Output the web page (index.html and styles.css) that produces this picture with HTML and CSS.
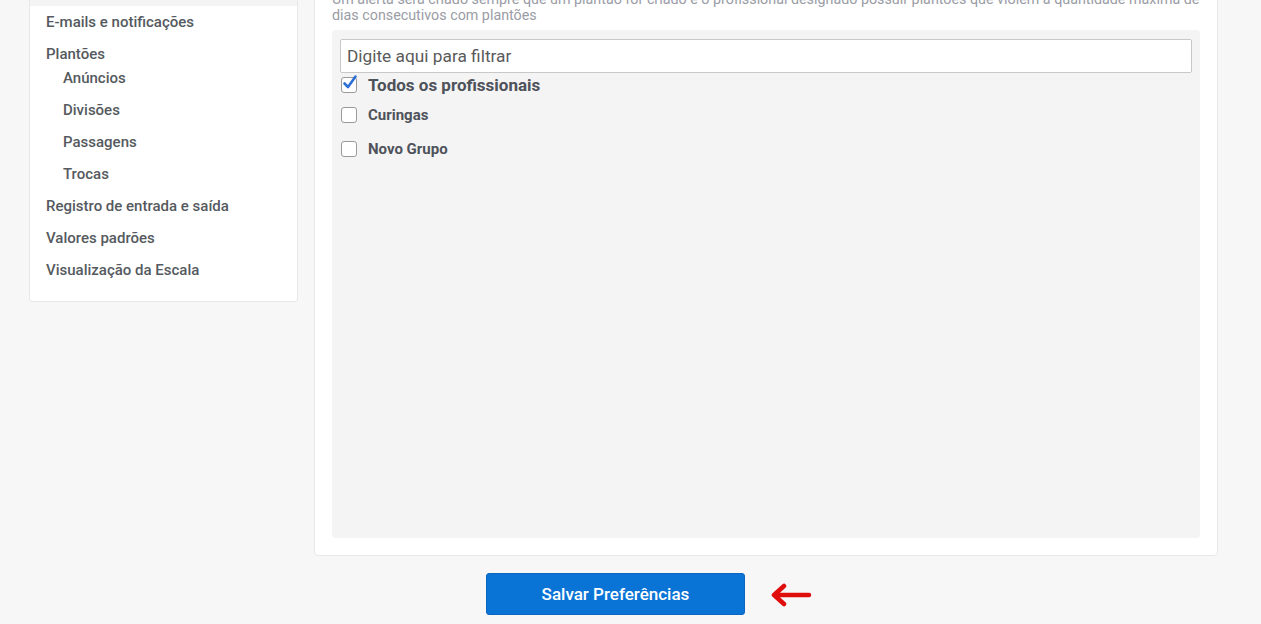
FILE: index.html
```html
<!DOCTYPE html>
<html>
<head>
    <title>Preferências</title>
    <link rel="stylesheet" href="styles.css">
</head>
<body>
    <div class="page">
        <div class="columns">
            <div class="sidebar">
                <a class="side-item active">Geral</a>
                <a class="side-item">E-mails e notificações</a>
                <a class="side-item group">Plantões</a>
                <div class="sub">
                    <a class="side-item">Anúncios</a>
                    <a class="side-item">Divisões</a>
                    <a class="side-item">Passagens</a>
                    <a class="side-item">Trocas</a>
                </div>
                <a class="side-item">Registro de entrada e saída</a>
                <a class="side-item">Valores padrões</a>
                <a class="side-item">Visualização da Escala</a>
            </div>

            <div class="main">
                <p class="help">Um alerta será criado sempre que um plantão for criado e o profissional designado possuir plantões que violem a quantidade máxima de dias consecutivos com plantões</p>
                <div class="picker">
                    <input type="text" class="filter" placeholder="Digite aqui para filtrar">
                    <label class="check all">
                        <span class="box">
                            <svg width="18" height="18" viewBox="0 0 18 18"><path d="M3.5 9.5 L7 13 L14.5 2.5" fill="none" stroke="#2d6fd6" stroke-width="2.6" stroke-linecap="round" stroke-linejoin="round"/></svg>
                        </span>
                        Todos os profissionais
                    </label>
                    <label class="check"><span class="box"></span>Curingas</label>
                    <label class="check"><span class="box"></span>Novo Grupo</label>
                </div>
            </div>
        </div>

        <div class="actions">
            <button class="save">Salvar Preferências</button>
            <svg class="arrow" width="42" height="24" viewBox="0 0 42 24"><path d="M39 12 H6 M14 3 L4 12 L14 21" fill="none" stroke="#e00d0d" stroke-width="4.5" stroke-linecap="round" stroke-linejoin="round"/></svg>
        </div>
    </div>
</body>
</html>
```

FILE: styles.css
```css
body {
    margin: 0;
    background-color: #f7f7f7;
    font-family: Roboto, 'Liberation Sans', sans-serif;
    color: #555a60;
    overflow: hidden;
}

.page {
    margin-top: -28px;
}

.columns {
    display: flex;
    align-items: flex-start;
    gap: 16px;
    padding-left: 29px;
}

.sidebar {
    width: 269px;
    box-sizing: border-box;
    background-color: white;
    border: 1px solid #e8e8e8;
    border-radius: 3px;
    padding: 1px 0 15px 0;
    display: flex;
    flex-direction: column;
}

.side-item {
    display: block;
    padding: 8px 16px;
    font-size: 15px;
    line-height: 16px;
    font-weight: 500;
    color: #555a60;
}

.side-item.active {
    background-color: #f4f4f4;
}

.side-item.group {
    padding-bottom: 0;
}

.sub .side-item {
    padding-left: 33px;
}

.main {
    width: 904px;
    box-sizing: border-box;
    background-color: white;
    border: 1px solid #e8e8e8;
    border-radius: 4px;
    padding: 18px 17px 17px 17px;
}

.help {
    margin: 0;
    font-size: 14.3px;
    line-height: 16px;
    color: #9a9ca6;
}

.picker {
    margin-top: 7px;
    height: 508px;
    box-sizing: border-box;
    background-color: #f4f4f4;
    border-radius: 4px;
    padding: 9px 8px;
}

.filter {
    display: block;
    width: 100%;
    height: 34px;
    box-sizing: border-box;
    border: 1px solid #c8c8c8;
    border-radius: 2px;
    padding: 0 6px;
    font-family: Roboto, sans-serif;
    font-size: 17.3px;
    color: #555;
    background: white;
}

.filter::placeholder {
    color: #5a5a5a;
}

.check {
    display: flex;
    align-items: center;
    gap: 11px;
    font-size: 15px;
    font-weight: 700;
    color: #4e525a;
    height: 20px;
    margin-top: 14px;
}

.check.all {
    font-size: 17px;
    margin-top: 2px;
}

.check.all + .check {
    margin-top: 10px;
}

.box {
    position: relative;
    width: 14px;
    height: 14px;
    margin-left: 1px;
    border: 1px solid #9a9a9a;
    border-radius: 3px;
    background: white;
}

.box svg {
    position: absolute;
    left: -1px;
    top: -4px;
}

.actions {
    display: flex;
    align-items: center;
    padding: 17px 0 0 486px;
    gap: 25px;
}

.save {
    width: 259px;
    height: 42px;
    background-color: #0a74d6;
    color: white;
    border: 1px solid #0a66c0;
    border-radius: 3px;
    font-family: Roboto, sans-serif;
    font-size: 17px;
    font-weight: 500;
    cursor: pointer;
}

.arrow {
    margin-top: 2px;
}
```
